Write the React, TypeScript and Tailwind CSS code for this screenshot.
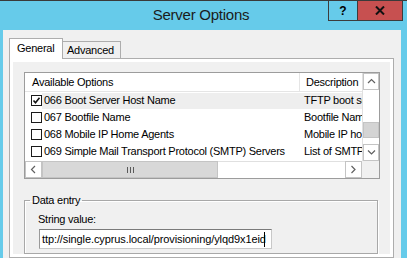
import React from "react";

const rows = [
  { checked: true, name: "066 Boot Server Host Name", desc: "TFTP boot server host name", selected: true },
  { checked: false, name: "067 Bootfile Name", desc: "Bootfile Name" },
  { checked: false, name: "068 Mobile IP Home Agents", desc: "Mobile IP home agents in priority order" },
  { checked: false, name: "069 Simple Mail Transport Protocol (SMTP) Servers", desc: "List of SMTP servers available to the client" },
];

function Chevron({ dir }: { dir: "up" | "down" | "left" | "right" }) {
  const pts = {
    up: "1,5 4.5,1.5 8,5",
    down: "1,1.5 4.5,5 8,1.5",
    left: "5,1 1.5,4.5 5,8",
    right: "1.5,1 5,4.5 1.5,8",
  }[dir];
  const vertical = dir === "up" || dir === "down";
  return (
    <svg width={vertical ? 9 : 7} height={vertical ? 7 : 9} viewBox={vertical ? "0 0 9 7" : "0 0 7 9"}>
      <polyline points={pts} fill="none" stroke="#606060" strokeWidth="1.2" />
    </svg>
  );
}

function Checkbox({ checked }: { checked: boolean }) {
  return (
    <div className="w-[11px] h-[11px] border border-[#1a1a1a] bg-white flex items-center justify-center">
      {checked && (
        <svg width="9" height="9" viewBox="0 0 9 9">
          <polyline points="1.5,4.5 3.5,6.8 7.5,1.8" fill="none" stroke="#111" strokeWidth="1.6" />
        </svg>
      )}
    </div>
  );
}

function Grip() {
  return (
    <div className="flex gap-[2px]">
      <div className="w-px h-[6px] bg-[#5a5a5a]" />
      <div className="w-px h-[6px] bg-[#5a5a5a]" />
      <div className="w-px h-[6px] bg-[#5a5a5a]" />
    </div>
  );
}

export default function App() {
  return (
    <div className="w-[407px] h-[258px] overflow-hidden bg-[#66cbea] border-t border-[#3a3a3a] flex flex-col font-['Liberation_Sans',Arial,sans-serif] text-[11px] tracking-[-0.25px] text-black">
      {/* title bar */}
      <div className="grid grid-cols-[1fr_auto_1fr] h-[29px] pr-[5px]">
        <div />
        <div className="pt-[5px] text-[15px] leading-[18px] text-[#1b1b1b]">Server Options</div>
        <div className="flex justify-end items-start">
          <div className="w-[29px] h-[20px] border-l border-b border-[#3c3c3c] flex items-center justify-center font-bold text-[12px] tracking-normal">
            ?
          </div>
          <div className="w-[46px] h-[20px] mr-[-1px] bg-[#c75050] border-l border-r border-b border-[#3c3c3c] flex items-center justify-center">
            <svg width="10" height="9" viewBox="0 0 10 9">
              <path d="M1 0.5 L9 8.5 M9 0.5 L1 8.5" stroke="#111" strokeWidth="2" />
            </svg>
          </div>
        </div>
      </div>

      {/* client area */}
      <div className="flex-1 ml-[3px] mr-[6px] bg-[#f0f0f0] pt-[8px] pl-[6px] flex flex-col min-h-0">
        <div className="flex items-end h-[20px]">
          <div className="relative z-10 -mb-px h-[21px] w-[54px] bg-white border border-b-0 border-[#adadad] pl-[7px] pt-[3px] leading-[13px]">
            General
          </div>
          <div className="h-[17px] w-[59px] -ml-px border border-b-0 border-[#adadad] bg-[#f0f0f0] pl-[4px] pt-[2px] leading-[13px]">
            Advanced
          </div>
        </div>

        <div className="w-[385px] flex-1 border border-[#adadad] bg-white p-[3px] flex flex-col min-h-0">
          <div className="flex-1 bg-[#f0f0f0] flex flex-col pt-[10px] pl-[11px]">
            {/* list view */}
            <div className="w-[356px] h-[107px] border border-[#9c9c9c] bg-white flex flex-col">
              <div className="flex h-[88px]">
                <div className="flex-1 overflow-hidden">
                  <div className="flex h-[19px] border-b border-[#e5e5e5] items-center whitespace-nowrap">
                    <div className="w-[275px] h-full border-r border-[#e5e5e5] pl-[7px] flex items-center">Available Options</div>
                    <div className="pl-[6px]">Description</div>
                  </div>
                  {rows.map((r) => (
                    <div key={r.name} className="flex h-[17px] items-center whitespace-nowrap">
                      <div className="w-[19px] pl-[6px] flex items-center">
                        <Checkbox checked={r.checked} />
                      </div>
                      <div className={`flex h-[16px] items-center flex-1 ${r.selected ? "bg-[#eeeeee]" : ""}`}>
                        <div className="w-[255px] pl-[2px] overflow-hidden">{r.name}</div>
                        <div className="pl-[7px]">{r.desc}</div>
                      </div>
                    </div>
                  ))}
                </div>
                <div className="w-[17px] flex flex-col border-l border-[#e0e0e0]">
                  <div className="h-[17px] border border-[#c4c4c4] flex items-center justify-center bg-white">
                    <Chevron dir="up" />
                  </div>
                  <div className="flex-1 bg-white pt-[32px]">
                    <div className="h-[16px] bg-[#d4d4d4] border border-[#c4c4c4]" />
                  </div>
                  <div className="h-[17px] border border-[#c4c4c4] flex items-center justify-center bg-white">
                    <Chevron dir="down" />
                  </div>
                </div>
              </div>
              <div className="flex h-[17px]">
                <div className="w-[17px] border border-[#c4c4c4] flex items-center justify-center bg-white">
                  <Chevron dir="left" />
                </div>
                <div className="w-[176px] bg-[#d8d8d8] border border-[#c4c4c4] flex items-center justify-center">
                  <Grip />
                </div>
                <div className="flex-1 bg-white border-t border-[#e0e0e0]" />
                <div className="w-[17px] border border-[#c4c4c4] flex items-center justify-center bg-white">
                  <Chevron dir="right" />
                </div>
                <div className="w-[17px] bg-[#f0f0f0]" />
              </div>
            </div>

            {/* data entry group */}
            <fieldset className="mt-[15px] w-[354px] flex-1 border border-[#a8a8a8] shadow-[1px_1px_0_#fff,inset_1px_1px_0_#fff]">
              <legend className="ml-[5px] px-[2px] leading-[13px]">Data entry</legend>
              <div className="pl-[13px]">
                <div className="mt-[6px] leading-[13px]">String value:</div>
                <div className="mt-[3px] ml-px w-[233px] h-[20px] bg-white border border-[#c8c8c8] border-t-[#7a7a7a] border-l-[#9a9a9a] pl-[2px] flex items-center overflow-hidden whitespace-nowrap tracking-[-0.1px]">
                  <span>ttp://single.cyprus.local/provisioning/ylqd9x1eid</span>
                  <span className="inline-block w-px h-[15px] bg-black -ml-[2px]" />
                </div>
              </div>
            </fieldset>
          </div>
        </div>
      </div>
    </div>
  );
}
